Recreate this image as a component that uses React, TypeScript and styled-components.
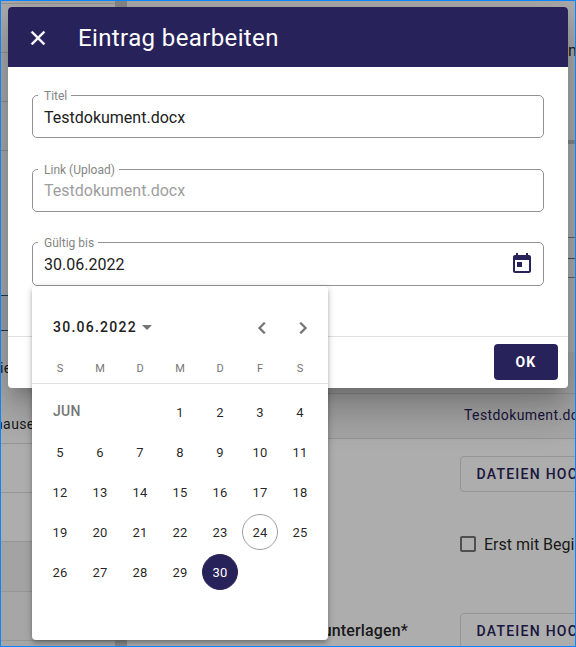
import React from "react";
import styled, { createGlobalStyle } from "styled-components";

const Global = createGlobalStyle`
  * { box-sizing: border-box; }
  body { margin: 0; font-family: Roboto, sans-serif; color: rgba(0,0,0,.87); overflow: hidden; }
  button { font: inherit; border: 0; background: none; padding: 0; color: inherit; }
`;
const navy = "#28225a";

const Screen = styled.div`
  position: relative; width: 576px; height: 647px; overflow: hidden; background: #fff;
`;
const Frame = styled.div`
  position: absolute; inset: 0; border: 1px solid #0a84ff; pointer-events: none;
`;
const Backdrop = styled.div`
  position: absolute; inset: 0; background: rgba(0,0,0,.32);
`;
const Page = styled.div`
  display: grid; grid-template-columns: 115px 12px 1fr; height: 647px; white-space: nowrap;
`;
const Gutter = styled.div`background: #ccc;`;
const Column = styled.div`display: flex; flex-direction: column; min-width: 0; overflow: hidden;`;
const Row = styled.div<{ $h: number; $bg?: string; $line?: string }>`
  flex: none; display: flex; align-items: center; height: ${p => p.$h}px;
  background: ${p => p.$bg || "#fff"};
  border-bottom: 1px solid ${p => p.$line || "#dcdcdc"};
  font-size: 14px; letter-spacing: .25px;
`;
const NavRow = styled(Row)`padding-top: 11px;`;
const NavText = styled.span`margin-left: -5px; letter-spacing: .4px;`;
const MainRow = styled(Row)`padding-left: 333px;`;
const EdgeRow = styled(MainRow)`padding: 0 0 38px 441px; font-size: 16px;`;
const FileLink = styled.span`color: ${navy}; letter-spacing: .4px; padding: 0 0 2px 4px;`;
const Upload = styled.button`
  flex: none; width: 180px; height: 36px; border: 1px solid #dcdcdc; border-radius: 4px;
  color: ${navy}; font-size: 14px; font-weight: 500; letter-spacing: 1.25px;
  text-align: left; padding-left: 15.5px;
`;
const CheckLabel = styled.span`
  display: flex; align-items: center; gap: 8px; font-size: 16px; letter-spacing: 0;
`;
const CheckBox = styled.span`width: 16px; height: 16px; border: 2px solid #757575; border-radius: 2px;`;
const UploadRow = styled(MainRow)`padding-left: 0;`;
const RowTitle = styled.strong`
  flex: none; width: 333px; padding: 0 52px 2px 0; text-align: right; font-size: 16px; font-weight: 500; letter-spacing: .15px;
`;

const Dialog = styled.section`
  position: absolute; left: 8px; top: 7px; width: 560px; height: 381px;
  display: flex; flex-direction: column; background: #fff; border-radius: 4px;
  box-shadow: 0 11px 15px -7px rgba(0,0,0,.2), 0 24px 38px 3px rgba(0,0,0,.14), 0 9px 46px 8px rgba(0,0,0,.12);
`;
const Header = styled.header`
  flex: none; height: 60px; display: flex; align-items: center; gap: 28px; padding: 2px 18px 0;
  background: ${navy}; color: #fff; border-radius: 4px 4px 0 0;
`;
const Title = styled.h1`margin: 0; font-size: 24px; line-height: 32px; font-weight: 400; letter-spacing: .38px;`;
const Form = styled.div`flex: 1; padding: 28px 24px 0; border-bottom: 1px solid #e0e0e0;`;
const Field = styled.fieldset<{ $h: number; $gap: number }>`
  margin: 0 0 ${p => p.$gap}px; height: ${p => p.$h}px; min-width: 0; padding: 0 9px;
  display: grid; grid-template-columns: 1fr auto; align-items: center; position: relative;
  border: 1px solid #929292; border-radius: 5px;
`;
const Label = styled.span`
  position: absolute; left: 5px; top: -8px; padding: 0 4px 0 6px; background: #fff;
  font-size: 12px; line-height: 16px; color: #858585;
`;
const Value = styled.span<{ $disabled?: boolean }>`
  padding: ${p => (p.$disabled ? 0 : 2)}px 0 0 2px; font-size: 16px; line-height: 24px; letter-spacing: 0;
  color: ${p => (p.$disabled ? "#9e9e9e" : "#212121")};
`;
const Actions = styled.footer`
  flex: none; height: 51px; display: flex; align-items: center; justify-content: flex-end; padding: 0 10px 2px;
`;
const OkButton = styled.button`
  width: 64px; height: 36px; border-radius: 4px; background: ${navy}; color: #fff;
  font-size: 14px; font-weight: 700; letter-spacing: 1.25px;
`;

const Calendar = styled.section`
  position: absolute; left: 32px; top: 286px; width: 296px; height: 354px;
  background: #fff; border-radius: 4px;
  box-shadow: 0 2px 4px -1px rgba(0,0,0,.2), 0 4px 5px rgba(0,0,0,.14), 0 1px 10px rgba(0,0,0,.12);
`;
const CalendarHead = styled.div`
  height: 66px; padding: 16px 13px 0 21px; display: flex; align-items: center;
`;
const Period = styled.button`
  flex: 1; display: flex; align-items: center; gap: 5px;
  font-size: 14px; font-weight: 500; letter-spacing: 1.25px; color: #212121;
`;
const Caret = styled.i`border: 5px solid transparent; border-top-color: #757575; border-bottom: 0;`;
const Arrow = styled.button`width: 24px; height: 24px; margin-left: 17px; padding-top: 1px; color: #757575;`;
const Grid = styled.div`display: grid; grid-template-columns: repeat(7, 40px); padding: 0 8px;`;
const WeekHead = styled(Grid)`
  height: 32px; padding-top: 2px; align-items: center; border-bottom: 1px solid #e0e0e0;
  font-size: 11px; color: #757575; text-align: center;
`;
const Days = styled(Grid)`grid-auto-rows: 40px; padding-top: 8px;`;
const Month = styled.span`
  grid-column: span 3; align-self: center; padding-left: 13px; margin-top: -3px;
  font-size: 14px; font-weight: 500; letter-spacing: .3px; color: #757575;
`;
const Day = styled.button<{ $state?: "today" | "selected" }>`
  width: 36px; height: 36px; margin: 2px; border-radius: 50%; font-size: 13px; letter-spacing: .2px;
  border: 1px solid ${p => (p.$state === "today" ? "#9e9e9e" : "transparent")};
  ${p => p.$state === "selected" && `background: ${navy}; border-color: ${navy}; color: #fff;`}
`;

const Icon = ({ path, weight = 0 }: { path: string; weight?: number }) => (
  <svg width="24" height="24" viewBox="0 0 24 24" fill="currentColor" stroke="currentColor" strokeWidth={weight} display="block">
    <path d={path} />
  </svg>
);
const closePath = "M19 6.41L17.59 5 12 10.59 6.41 5 5 6.41 10.59 12 5 17.59 6.41 19 12 13.41 17.59 19 19 17.59 13.41 12z";
const leftPath = "M15.41 7.41L14 6l-6 6 6 6 1.41-1.41L10.83 12z";
const rightPath = "M10 6L8.59 7.41 13.17 12l-4.58 4.59L10 18l6-6z";
const datePath = "M19 4h-1V2h-2v2H8V2H6v2H5c-1.11 0-1.99.9-1.99 2L3 20c0 1.1.89 2 2 2h14c1.1 0 2-.9 2-2V6c0-1.1-.9-2-2-2zm0 16H5V9h14v11zM7 11h5v5H7z";
const CalendarIcon = styled.span`color: ${navy}; padding-bottom: 2px;`;

export default function App() {
  return (
    <Screen>
      <Global />
      <Page>
        <Column>
          <Row $h={4} />
          <Row $h={49} />
          <Row $h={49} />
          <Row $h={49} />
          <Row $h={145} $line="#245a82" />
          <Row $h={35} $bg="#f1f7fb" $line="#245a82" />
          <NavRow $h={63} $line="#fff">ie</NavRow>
          <NavRow $h={50}><NavText>hausen</NavText></NavRow>
          <Row $h={49} />
          <Row $h={49} />
          <Row $h={50} $bg="#f0f0f0" />
          <Row $h={49} $bg="#f5f5f5" />
          <Row $h={10} $bg="#f5f5f5" />
        </Column>
        <Gutter />
        <Column>
          <EdgeRow $h={140} $line="#fff">n</EdgeRow>
          <Row $h={4} $bg="#ccc" $line="#ccc" />
          <Row $h={94} $line="#999" />
          <Row $h={21} $line="#777" />
          <Row $h={19} $line="#999" />
          <Row $h={75} $line="#f5f5f5" />
          <Row $h={41} $bg="#f5f5f5" />
          <MainRow $h={45} $bg="#f5f5f5"><FileLink>Testdokument.docx</FileLink></MainRow>
          <MainRow $h={71} $line="#fff"><Upload>DATEIEN HOCHLADEN</Upload></MainRow>
          <MainRow $h={69} $line="#fff"><CheckLabel><CheckBox />Erst mit Beginn</CheckLabel></MainRow>
          <UploadRow $h={105} $line="#fff"><RowTitle>unterlagen*</RowTitle><Upload>DATEIEN HOCHLADEN</Upload></UploadRow>
        </Column>
      </Page>
      <Backdrop />
      <Dialog>
        <Header><Icon path={closePath} weight={0.4} /><Title>Eintrag bearbeiten</Title></Header>
        <Form>
          <Field $h={43} $gap={31}><Label>Titel</Label><Value>Testdokument.docx</Value></Field>
          <Field $h={43} $gap={30}><Label>Link (Upload)</Label><Value $disabled>Testdokument.docx</Value></Field>
          <Field $h={44} $gap={0}><Label>Gültig bis</Label><Value>30.06.2022</Value><CalendarIcon><Icon path={datePath} /></CalendarIcon></Field>
        </Form>
        <Actions><OkButton>OK</OkButton></Actions>
      </Dialog>
      <Calendar>
        <CalendarHead>
          <Period>30.06.2022<Caret /></Period>
          <Arrow><Icon path={leftPath} weight={0.3} /></Arrow>
          <Arrow><Icon path={rightPath} weight={0.3} /></Arrow>
        </CalendarHead>
        <WeekHead>{["S", "M", "D", "M", "D", "F", "S"].map((d, i) => <span key={i}>{d}</span>)}</WeekHead>
        <Days>
          <Month>JUN</Month>
          {Array.from({ length: 30 }, (_, i) => i + 1).map(d => (
            <Day key={d} $state={d === 24 ? "today" : d === 30 ? "selected" : undefined}>{d}</Day>
          ))}
        </Days>
      </Calendar>
      <Frame />
    </Screen>
  );
}
